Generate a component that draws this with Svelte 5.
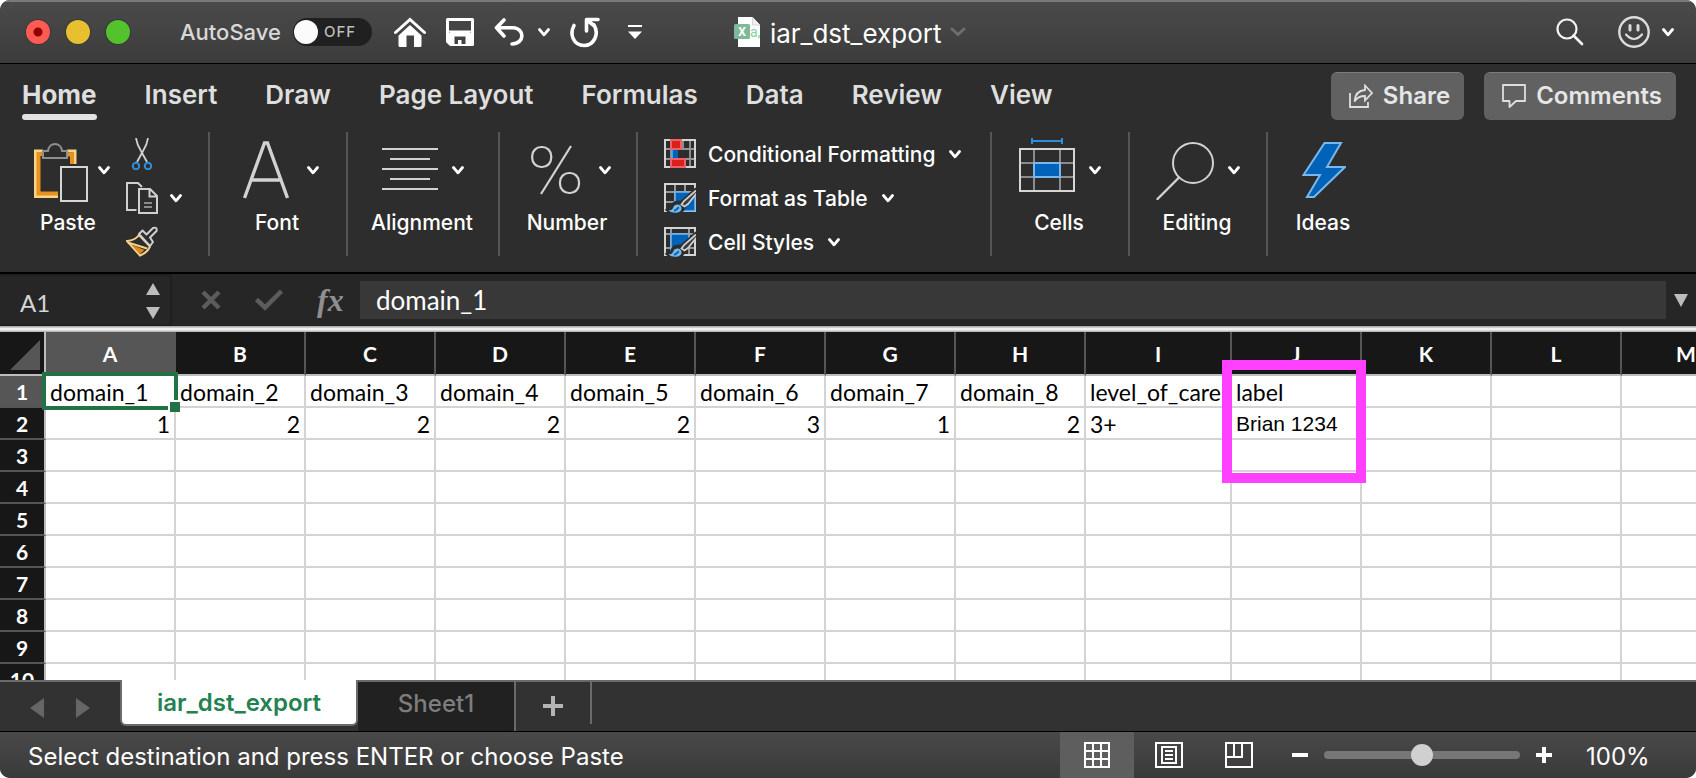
<script>
  let autosave = $state(false);
  let zoom = $state(50);
  let cellName = $state('A1');
  let formula = $state('domain_1');
  let view = $state('normal');

  const tabs = ['Home', 'Insert', 'Draw', 'Page Layout', 'Formulas', 'Data', 'Review', 'View'];
  const columns = ['A', 'B', 'C', 'D', 'E', 'F', 'G', 'H', 'I', 'J', 'K', 'L', 'M'];
  const cells = {
    1: ['domain_1', 'domain_2', 'domain_3', 'domain_4', 'domain_5', 'domain_6', 'domain_7', 'domain_8', 'level_of_care', 'label'],
    2: [1, 2, 2, 2, 2, 3, 1, 2, '3+', 'Brian 1234']
  };
  const rows = Array.from({ length: 10 }, (_, i) => i + 1);
</script>

{#snippet chevron()}
  <svg class="chevron" width="12" height="10" viewBox="0 0 12 10" aria-hidden="true"><path d="M1.500 2.500 6 7.800 10.500 2.500" fill="none" stroke="currentColor" stroke-width="2.800" stroke-linecap="round" stroke-linejoin="round" /></svg>
{/snippet}

{#snippet brush()}
  <path d="M32 5 17 18.500C10 17 8 21 6.500 25L2 27C8 32 20 31 20.500 24.500L33 10" fill="#2d2d2d" stroke="#2d2d2d" stroke-width="1.500" />
  <path d="M32 7.500 20 18 17.500 21.500 20.500 23.500 24 21 32.500 10.500" fill="#3c3c3c" stroke="#cfcfcf" stroke-width="1.800" />
  <path d="M4.500 27.300c3.500 .2 4-1.200 5-3.300 1.500-2.700 5-3.200 7-1.200 2.200 2.500.8 6-3 6.700-3 .6-6.500.2-9-2.200z" fill="#78b8ec" />
  <path d="M10 27.500c3 0 3-2.500 5-3" stroke="#0063b8" stroke-width="2" fill="none" />
{/snippet}

<div class="window">
  <header class="titlebar">
    <div class="lights">
      <button class="light close" aria-label="Close"></button>
      <button class="light minimize" aria-label="Minimize"></button>
      <button class="light full" aria-label="Full screen"></button>
    </div>
    <label class="autosave">
      <span>AutoSave</span>
      <span class="track"><input type="checkbox" role="switch" bind:checked={autosave} /><span class="state">{autosave ? 'ON' : 'OFF'}</span></span>
    </label>
    <div class="quick">
      <button aria-label="Home screen">
        <svg width="32" height="30" viewBox="0 0 32 30"><path d="M1.500 15.500 16 2.500l14.500 13" fill="none" stroke="#fff" stroke-width="3" stroke-linecap="round" /><path d="M16 8 27.500 18.500V28.500a1.500 1.500 0 0 1-1.500 1.500H20V18.500H12.500V30H6a1.500 1.500 0 0 1-1.500-1.500V18.500z" fill="#fff" /></svg>
      </button>
      <button aria-label="Save">
        <svg width="28" height="28" viewBox="0 0 28 28"><path d="M1.500 1.500H26.500V26.500H4.500L1.500 23.500z" fill="none" stroke="#fff" stroke-width="3" stroke-linejoin="round" /><path d="M3 14.500H25V27H3z" fill="#fff" /><path d="M2 12.500 4.500 15H23.500L26 12.500" fill="#fff" /><path d="M8.500 26V18.500H19.500V26H15.500V22H12V26z" fill="#434343" /></svg>
      </button>
      <span class="split">
        <button aria-label="Undo">
          <svg width="30" height="28" viewBox="0 0 30 28"><path d="M10 2 2.500 9.800 10 18M3 9.800H19c12 .5 12 16-1 16.200" fill="none" stroke="#fff" stroke-width="3.600" stroke-linecap="round" stroke-linejoin="round" /></svg>
        </button>
        <button aria-label="Undo history">{@render chevron()}</button>
      </span>
      <button aria-label="Redo">
        <svg width="30" height="32" viewBox="0 0 30 32"><path d="M4 9.500C-1 19 4 29.500 14 29.500S29.500 18 24 9M16.500 15V3.500H28M17 4l7.500 6" fill="none" stroke="#fff" stroke-width="3.600" stroke-linecap="round" stroke-linejoin="round" /></svg>
      </button>
      <button class="more" aria-label="Customize toolbar">
        <svg width="14" height="16" viewBox="0 0 14 16"><path d="M0 1H14V3H0z" fill="#fff" /><path d="M0 7.500H14L7 15z" fill="#fff" /></svg>
      </button>
    </div>
    <div class="title">
      <svg width="27" height="30" viewBox="0 0 27 30" aria-hidden="true"><path d="M4 0H18.500L26 8V30H4z" fill="#fff" /><path d="M18.500 0V8H26" fill="#f2f2f2" stroke="#d5d5d5" stroke-width="1" /><rect y="7" width="16" height="15" rx="1.500" fill="#7fba98" /><text x="8" y="19" text-anchor="middle" font-family="Roboto, sans-serif" font-size="12" font-weight="700" fill="#fff">X</text><text x="16" y="20" font-family="Roboto, sans-serif" font-size="14" fill="#7fd1a0">a,</text></svg>
      <span>iar_dst_export</span>
      <svg width="16" height="10" viewBox="0 0 16 10" aria-hidden="true"><path d="M2 2l6 5.500L14 2" fill="none" stroke="#6e6e6e" stroke-width="3" stroke-linecap="round" /></svg>
    </div>
    <div class="account">
      <button aria-label="Search">
        <svg width="28" height="28" viewBox="0 0 28 28"><circle cx="11" cy="11" r="9.500" fill="none" stroke="#f4f4f4" stroke-width="2.200" /><path d="M17.500 17.500 26 26" stroke="#f4f4f4" stroke-width="2.600" stroke-linecap="round" /></svg>
      </button>
      <button class="smile" aria-label="Feedback">
        <svg width="32" height="32" viewBox="0 0 32 32"><circle cx="16" cy="16" r="14.700" fill="none" stroke="#dcdcdc" stroke-width="2.400" /><path d="M12 9.500V14M20 9.500V14" stroke="#dcdcdc" stroke-width="3" stroke-linecap="round" /><path d="M8 18.500Q16 27.500 24 18.500" fill="none" stroke="#dcdcdc" stroke-width="2.200" stroke-linecap="round" /></svg>
        {@render chevron()}
      </button>
    </div>
  </header>

  <div class="tabrow">
    <nav aria-label="Ribbon tabs">
      {#each tabs as tab, i}
        <button class="tab" class:current={i === 0}>{tab}</button>
      {/each}
    </nav>
    <div class="actions">
      <button class="action">
        <svg width="24" height="24" viewBox="0 0 24 24" aria-hidden="true"><path d="M1 9V23H19V18" fill="none" stroke="#dedede" stroke-width="1.800" /><path d="M16 1.500 23 9 16 16.500V12C11 12 8 13.500 5.500 17.500 6 10.500 10 6.500 16 6z" fill="none" stroke="#dedede" stroke-width="1.800" /></svg>
        Share
      </button>
      <button class="action">
        <svg width="24" height="24" viewBox="0 0 24 24" aria-hidden="true"><path d="M1 1H23V17H14L7.500 23V17H1z" fill="none" stroke="#dedede" stroke-width="1.800" stroke-linejoin="round" /></svg>
        Comments
      </button>
    </div>
  </div>

  <div class="ribbon">
    <div class="group clipboard">
      <button class="big">
        <span class="face">
          <svg width="56" height="64" viewBox="0 0 56 64" aria-hidden="true"><path d="M9 13H1.500V58.500H24" fill="none" stroke="#f7d488" stroke-width="3" /><path d="M33 13H41V26" fill="none" stroke="#f7d488" stroke-width="3" /><path d="M9 16H4.500V55.500H24M34 16.500H38V26" fill="none" stroke="#e8921e" stroke-width="4" /><path d="M9 13H14C15 3.500 27 3.500 28 13H33V20H9z" fill="#2d2d2d" stroke="#8f8f8f" stroke-width="2" /><rect x="27" y="29" width="26" height="34" fill="#2d2d2d" stroke="#d6d6d6" stroke-width="2" /></svg>
          {@render chevron()}
        </span>
        <span class="label">Paste</span>
      </button>
      <div class="small">
        <button aria-label="Cut">
          <svg width="32" height="32" viewBox="0 0 32 32"><path d="M10 0Q11 7 15 13L21 24M22 0Q21 7 17 13L11 24" fill="none" stroke="#d0d0d0" stroke-width="1.800" /><circle cx="10" cy="28" r="3.200" fill="none" stroke="#2f8ed8" stroke-width="2" /><circle cx="22" cy="28" r="3.200" fill="none" stroke="#2f8ed8" stroke-width="2" /></svg>
        </button>
        <button aria-label="Copy">
          <svg width="32" height="32" viewBox="0 0 32 32"><path d="M10.500 28H1V1H12L16 5" fill="none" stroke="#d0d0d0" stroke-width="2" /><path d="M13 7H24L31 14V31H13zM23.500 7V14.500H31" fill="none" stroke="#d0d0d0" stroke-width="2" /><path d="M18 21H26M18 25H26" stroke="#8a8a8a" stroke-width="2" /></svg>
          {@render chevron()}
        </button>
        <button aria-label="Format painter">
          <svg width="32" height="32" viewBox="0 0 32 32"><path d="M1 15Q9 14.500 13 9L24 20.500Q21 27 14 29.500z" fill="#2d2d2d" stroke="#f5d287" stroke-width="2" /><path d="M5 18.500 18.500 24 14 28z" fill="#e08a1d" /><path d="M2 16.500 21 22.500" stroke="#f5d287" stroke-width="2" /><path d="M13 8 16.500 4.500 20.500 8.500 27 2Q31.500 .5 30.500 5L24 11.500 27 16 24 20z" fill="#2d2d2d" stroke="#d0d0d0" stroke-width="2" stroke-linejoin="round" /></svg>
        </button>
      </div>
    </div>

    <div class="group narrow">
      <button class="big">
        <span class="face wide">
          <svg width="46" height="64" viewBox="0 0 46 64" aria-hidden="true"><path d="M1.500 60 21.500 5H24.500L44.500 60M9 42H37" fill="none" stroke="#d2d2d2" stroke-width="3.400" /></svg>
          {@render chevron()}
        </span>
        <span class="label">Font</span>
      </button>
    </div>

    <div class="group medium">
      <button class="big">
        <span class="face">
          <svg width="56" height="64" viewBox="0 0 56 64" aria-hidden="true"><path d="M0 11H56M8 21H48M0 31H56M8 41H48M0 51H56" stroke="#d2d2d2" stroke-width="2" /></svg>
          {@render chevron()}
        </span>
        <span class="label">Alignment</span>
      </button>
    </div>

    <div class="group narrow">
      <button class="big">
        <span class="face wide">
          <svg width="50" height="64" viewBox="0 0 50 64" aria-hidden="true"><path d="M40 8 10 56" stroke="#d2d2d2" stroke-width="2.200" /><rect x="1.200" y="9" width="19" height="20" rx="9" fill="none" stroke="#d2d2d2" stroke-width="2.200" /><rect x="29" y="35" width="19" height="20" rx="9" fill="none" stroke="#d2d2d2" stroke-width="2.200" /></svg>
          {@render chevron()}
        </span>
        <span class="label">Number</span>
      </button>
    </div>

    <div class="group styles">
      <button>
        <svg width="32" height="30" viewBox="0 0 32 30" aria-hidden="true"><path d="M1 10H31M1 20H31M7 1V28M19 1V28M26 1V28" stroke="#969696" stroke-width="1.800" /><rect x="1" y="1" width="30" height="27" fill="none" stroke="#d4d4d4" stroke-width="2" /><rect x="7" y="1" width="10" height="9" fill="#d9201a" stroke="#f0606a" stroke-width="2" /><rect x="7" y="20" width="14" height="8" fill="#d9201a" stroke="#f0606a" stroke-width="2" /><path d="M14 11H25V19H14z" fill="#2d2d2d" /><path d="M8 11H14V19H8z" fill="#0063b8" /><path d="M8 11V19" stroke="#5fb0ee" stroke-width="1.500" /></svg>
        Conditional Formatting {@render chevron()}
      </button>
      <button>
        <svg width="32" height="30" viewBox="0 0 32 30" aria-hidden="true"><path d="M1 9H31M1 19H31M11 1V28M21 1V28" stroke="#969696" stroke-width="2" /><rect x="1" y="1" width="30" height="27" fill="none" stroke="#d4d4d4" stroke-width="2" /><rect x="11" y="9" width="20" height="19" fill="#0063b8" stroke="#78b8ec" stroke-width="1.500" />{@render brush()}</svg>
        Format as Table {@render chevron()}
      </button>
      <button>
        <svg width="32" height="30" viewBox="0 0 32 30" aria-hidden="true"><path d="M1 7H31M1 21H31M7 1V28M25 1V28" stroke="#969696" stroke-width="2" /><rect x="1" y="1" width="30" height="27" fill="none" stroke="#d4d4d4" stroke-width="2" /><rect x="7" y="7" width="18" height="14" fill="#0063b8" stroke="#78b8ec" stroke-width="1.500" />{@render brush()}</svg>
        Cell Styles {@render chevron()}
      </button>
    </div>

    <div class="group narrow">
      <button class="big">
        <span class="face">
          <svg width="56" height="64" viewBox="0 0 56 64" aria-hidden="true"><path d="M13 3H43M13 0V6M43 0V6" stroke="#2f8ed8" stroke-width="2" /><path d="M1 25H55M1 39H55M15 11V53M41 11V53" stroke="#8c8c8c" stroke-width="2" /><rect x="1" y="11" width="54" height="42" fill="none" stroke="#d6d6d6" stroke-width="2" /><rect x="15" y="25" width="26" height="14" fill="#0063b8" stroke="#78b8ec" stroke-width="2" /></svg>
          {@render chevron()}
        </span>
        <span class="label">Cells</span>
      </button>
    </div>

    <div class="group narrow">
      <button class="big">
        <span class="face">
          <svg width="58" height="64" viewBox="0 0 58 64" aria-hidden="true"><circle cx="37" cy="25" r="20" fill="none" stroke="#d2d2d2" stroke-width="2" /><path d="M23 39.500 1.500 61" stroke="#d2d2d2" stroke-width="2.400" stroke-linecap="round" /></svg>
          {@render chevron()}
        </span>
        <span class="label">Editing</span>
      </button>
    </div>

    <div class="group last">
      <button class="big">
        <span class="face">
          <svg width="44" height="64" viewBox="0 0 44 64" aria-hidden="true"><path d="M22.500 5H39L25 29H43L12 59H5L18 37H1.500z" fill="#0063b8" stroke="#78b8ec" stroke-width="2" /></svg>
        </span>
        <span class="label">Ideas</span>
      </button>
    </div>
  </div>

  <div class="formulabar">
    <div class="namebox">
      <input aria-label="Name box" bind:value={cellName} />
      <svg width="14" height="36" viewBox="0 0 14 36" aria-hidden="true"><path d="M7 0 14 12H0zM0 24H14L7 36z" fill="#bcbcbc" /></svg>
    </div>
    <div class="entry">
      <button aria-label="Cancel"><svg width="20" height="20" viewBox="0 0 20 20"><path d="M2 2 18 18M18 2 2 18" stroke="#5c5c5c" stroke-width="4.500" /></svg></button>
      <button aria-label="Enter"><svg width="28" height="22" viewBox="0 0 28 22"><path d="M1.500 10.500 10 18.500 26.500 2" fill="none" stroke="#5c5c5c" stroke-width="4.500" /></svg></button>
      <button class="fx" aria-label="Insert function">fx</button>
    </div>
    <input class="formula" aria-label="Formula" bind:value={formula} />
    <button class="expand" aria-label="Expand formula bar"><svg width="14" height="14" viewBox="0 0 14 14"><path d="M0 1H14L7 14z" fill="#bcbcbc" /></svg></button>
  </div>

  <div class="sheet">
    <table>
      <colgroup>
        <col class="index" />
        {#each columns as c}<col class={c === 'I' ? 'broad' : 'cell'} />{/each}
      </colgroup>
      <thead>
        <tr>
          <th class="corner" aria-label="Select all"><svg width="30" height="30" viewBox="0 0 30 30" aria-hidden="true"><path d="M30 0V30H0z" fill="#565656" /></svg></th>
          {#each columns as c}<th scope="col" class:active={c === 'A'}>{c}</th>{/each}
        </tr>
      </thead>
      <tbody>
        {#each rows as r}
          <tr>
            <th scope="row" class:active={r === 1}>{r}</th>
            {#each columns as c, i}
              {@const value = cells[r]?.[i] ?? ''}
              <td class:number={typeof value === 'number'} class:plain={r === 2 && c === 'J'} class:selected={r === 1 && c === 'A'} class:marked={r === 1 && c === 'J'}>{value}{#if r === 1 && c === 'A'}<i class="cursor"></i><i class="handle"></i>{/if}{#if r === 1 && c === 'J'}<i class="marker"></i>{/if}</td>
            {/each}
          </tr>
        {/each}
      </tbody>
    </table>
  </div>

  <div class="sheettabs">
    <div class="arrows">
      <button aria-label="Previous sheet"><svg width="14" height="20" viewBox="0 0 14 20"><path d="M14 0V20L0 10z" fill="#666" /></svg></button>
      <button aria-label="Next sheet"><svg width="14" height="20" viewBox="0 0 14 20"><path d="M0 0V20L14 10z" fill="#666" /></svg></button>
    </div>
    <button class="sheettab open">iar_dst_export</button>
    <button class="sheettab">Sheet1</button>
    <button class="add" aria-label="Add sheet"><svg width="20" height="20" viewBox="0 0 20 20"><path d="M10 0V20M0 10H20" stroke="#b4b4b4" stroke-width="4" /></svg></button>
  </div>

  <footer>
    <span class="message">Select destination and press ENTER or choose Paste</span>
    <div class="views">
      <button class:pressed={view === 'normal'} aria-label="Normal view" onclick={() => (view = 'normal')}><svg width="26" height="26" viewBox="0 0 26 26"><path d="M1 1H25V25H1zM9 1V25M17 1V25M1 9H25M1 17H25" fill="none" stroke="#fff" stroke-width="2" /></svg></button>
      <button class:pressed={view === 'layout'} aria-label="Page layout view" onclick={() => (view = 'layout')}><svg width="28" height="26" viewBox="0 0 28 26"><path d="M1 1H27V25H1zM7 5H21V21H7zM10 9H18M10 13H18M10 17H18" fill="none" stroke="#fff" stroke-width="2" /></svg></button>
      <button class:pressed={view === 'break'} aria-label="Page break view" onclick={() => (view = 'break')}><svg width="28" height="26" viewBox="0 0 28 26"><path d="M1 1H27V25H1zM9 1V15M1 15H17V1" fill="none" stroke="#fff" stroke-width="2" /></svg></button>
    </div>
    <div class="zoom">
      <button aria-label="Zoom out"><svg width="16" height="16" viewBox="0 0 16 16"><path d="M0 8H16" stroke="#fff" stroke-width="4" /></svg></button>
      <input type="range" aria-label="Zoom" min="0" max="100" bind:value={zoom} />
      <button aria-label="Zoom in"><svg width="16" height="16" viewBox="0 0 16 16"><path d="M8 0V16M0 8H16" stroke="#fff" stroke-width="4" /></svg></button>
    </div>
    <span class="percent">{zoom * 2}%</span>
  </footer>
</div>

<style>
  :global(body) {
    margin: 0;
    background: #fff;
  }
  * {
    box-sizing: border-box;
  }
  svg {
    display: block;
    flex: none;
  }
  button {
    display: flex;
    align-items: center;
    margin: 0;
    padding: 0;
    border: 0;
    background: none;
    color: inherit;
    font: inherit;
  }
  .window {
    display: flex;
    flex-direction: column;
    height: 100vh;
    overflow: hidden;
    border-radius: 10px;
    background: #2d2d2d;
    color: #fff;
    font-family: Inter, 'Liberation Sans', sans-serif;
    font-size: 21px;
  }

  .titlebar {
    display: flex;
    align-items: center;
    flex: none;
    height: 64px;
    padding: 0 22px 2px 26px;
    border-top: 2px solid #7a7a7a;
    border-bottom: 1px solid #000;
    background: linear-gradient(#4a4a4a, #3c3c3c);
  }
  .lights {
    display: flex;
    gap: 16px;
  }
  .light {
    width: 24px;
    height: 24px;
    border-radius: 50%;
    box-shadow: 0 0 0 1px #383838;
  }
  .close {
    background: radial-gradient(circle, #900000 0 4px, #ff5b52 5px);
  }
  .minimize {
    background: #e6c02e;
  }
  .full {
    background: #54c22d;
  }
  .autosave {
    display: flex;
    align-items: center;
    gap: 12px;
    margin-left: 50px;
    color: #d8d8d8;
    font-size: 22px;
    font-weight: 500;
  }
  .track {
    display: flex;
    align-items: center;
    gap: 6px;
    width: 79px;
    height: 28px;
    padding: 0 1px;
    border-radius: 14px;
    background: #202020;
  }
  .track input {
    appearance: none;
    width: 24px;
    height: 24px;
    margin: 0;
    border-radius: 50%;
    background: #fbfbfb;
  }
  .state {
    color: #bdbdbd;
    font-size: 15px;
    letter-spacing: 1px;
  }
  .quick {
    display: flex;
    align-items: center;
    gap: 20px;
    margin-left: 22px;
  }
  .split {
    display: flex;
    align-items: center;
    gap: 14px;
  }
  .more {
    margin-left: 8px;
  }
  .title {
    display: flex;
    align-items: center;
    gap: 9px;
    margin-left: 92px;
    font-size: 26px;
  }
  .title span {
    padding-top: 4px;
  }
  .account {
    display: flex;
    align-items: center;
    gap: 34px;
    margin-left: auto;
  }
  .smile {
    gap: 12px;
  }

  .tabrow {
    display: flex;
    align-items: flex-start;
    justify-content: space-between;
    flex: none;
    height: 66px;
    padding: 8px 20px 0 22px;
    color: #dedede;
  }
  nav {
    display: flex;
    gap: 48px;
  }
  .tab {
    height: 48px;
    padding-bottom: 3px;
    font-size: 26px;
    font-weight: 600;
  }
  .current {
    position: relative;
    font-weight: 700;
  }
  .current::after {
    content: '';
    position: absolute;
    inset: auto 0 0;
    height: 6px;
    border-radius: 3px;
    background: #e2e2e2;
  }
  .actions {
    display: flex;
    gap: 20px;
  }
  .action {
    gap: 10px;
    height: 48px;
    padding: 0 14px 2px 18px;
    border-top: 1px solid #7c7c7c;
    border-radius: 6px;
    background: #616161;
    color: #e6e6e6;
    font-size: 24px;
    font-weight: 600;
  }

  .ribbon {
    display: flex;
    flex: none;
    height: 144px;
    padding: 2px 0 16px;
    border-bottom: 2px solid #000;
    font-weight: 500;
  }
  .group {
    display: flex;
    flex: none;
    justify-content: center;
    border-right: 2px solid #555;
  }
  .clipboard {
    justify-content: flex-start;
    width: 210px;
    padding-left: 34px;
  }
  .narrow {
    width: 138px;
  }
  .medium {
    width: 152px;
  }
  .last {
    width: 112px;
    border: 0;
  }
  .big {
    flex-direction: column;
    padding-top: 6px;
  }
  .face {
    display: flex;
    align-items: center;
    gap: 14px;
    height: 64px;
  }
  .face.wide {
    gap: 18px;
    padding-left: 6px;
  }
  .label {
    margin-top: 7px;
    padding-right: 2px;
    line-height: 28px;
  }
  .clipboard .face {
    gap: 8px;
  }
  .clipboard .label {
    align-self: flex-start;
    width: 70px;
    text-align: center;
  }
  .small {
    display: flex;
    flex-direction: column;
    gap: 12px;
    margin-left: 16px;
    padding-top: 6px;
  }
  .small button {
    gap: 12px;
    height: 32px;
  }
  .styles {
    flex-direction: column;
    justify-content: flex-start;
    gap: 16px;
    width: 354px;
    padding: 8px 0 0 26px;
  }
  .styles button {
    gap: 12px;
    height: 28px;
  }
  .styles .chevron {
    margin-left: 2px;
  }

  .formulabar {
    display: flex;
    align-items: center;
    flex: none;
    height: 52px;
    background: #262626;
    font-family: Lato, Carlito, sans-serif;
  }
  .namebox {
    display: flex;
    align-items: center;
    align-self: stretch;
    width: 172px;
    padding: 2px 10px 0 20px;
    border: 2px solid #1f1f1f;
    border-left: 0;
  }
  input {
    font-family: inherit;
  }
  .namebox input {
    flex: 1;
    min-width: 0;
    padding: 2px 0 0;
    border: 0;
    background: none;
    color: #d6d6d6;
    font-size: 24px;
  }
  .entry {
    display: flex;
    align-items: center;
    gap: 34px;
    width: 188px;
    padding-left: 29px;
  }
  .fx {
    color: #8f8f8f;
    font: italic bold 32px/34px 'Liberation Serif', serif;
  }
  .formula {
    flex: 1;
    min-width: 0;
    height: 38px;
    padding: 0 16px;
    border: 0;
    background: #383838;
    color: #fff;
    font-size: 26px;
  }
  .expand {
    margin: 0 8px;
  }

  .sheet {
    flex: 1;
    min-height: 0;
    overflow: hidden;
    padding-top: 6px;
    background: linear-gradient(#999, #fff 3px, #aaa) 0 0 / 100% 6px no-repeat #fff;
    color: #000;
    font-family: Lato, Carlito, sans-serif;
  }
  table {
    width: 1752px;
    border-spacing: 0;
    table-layout: fixed;
    font-size: 23px;
  }
  .index {
    width: 46px;
  }
  .cell {
    width: 130px;
  }
  .broad {
    width: 146px;
  }
  th {
    padding: 0;
    border-right: 2px solid #555;
    border-bottom: 2px solid #bdbdbd;
    background: #171717;
    color: #fff;
    font-size: 21px;
    font-weight: 700;
  }
  thead th {
    height: 44px;
  }
  tbody th {
    border-right-color: #bdbdbd;
    border-bottom-color: #555;
  }
  .corner {
    border-right-color: #bdbdbd;
    vertical-align: bottom;
  }
  .corner svg {
    margin: 0 0 4px 10px;
  }
  thead .active {
    border-right-color: #565656;
  }
  .active {
    background: #565656;
  }
  td {
    height: 32px;
    padding: 2px 4px 0;
    border-right: 2px solid #d4d4d4;
    border-bottom: 2px solid #d4d4d4;
    line-height: 28px;
    white-space: nowrap;
  }
  .number {
    text-align: right;
  }
  .plain {
    font-family: 'Liberation Sans', Arial, sans-serif;
    font-size: 21px;
  }
  .selected,
  .marked {
    position: relative;
  }
  .cursor {
    position: absolute;
    inset: -4px;
    border: 4px solid #217346;
  }
  .handle {
    position: absolute;
    right: -6px;
    bottom: -6px;
    width: 12px;
    height: 12px;
    border: solid #fff;
    border-width: 2px 0 0 2px;
    background: #217346;
  }
  .marker {
    position: absolute;
    inset: -16px -6px auto -10px;
    height: 123px;
    border: 10px solid #ff40ff;
  }

  .sheettabs {
    display: flex;
    flex: none;
    height: 52px;
    border-top: 2px solid #6a6a6a;
    border-bottom: 1px solid #000;
    background: #323232;
  }
  .arrows {
    display: flex;
    gap: 32px;
    width: 120px;
    padding: 2px 0 0 30px;
  }
  .sheettab {
    justify-content: center;
    width: 158px;
    padding-bottom: 6px;
    border-right: 2px solid #6a6a6a;
    background: #212121;
    color: #7d7d7d;
    font-size: 24px;
    font-weight: 500;
  }
  .open {
    width: 238px;
    height: 46px;
    margin-top: -2px;
    padding-bottom: 0;
    border: solid #6a6a6a;
    border-width: 0 2px 2px;
    border-radius: 0 0 6px 6px;
    background: #fff;
    color: #23824f;
    font-weight: 600;
  }
  .add {
    justify-content: center;
    width: 76px;
    height: 42px;
    padding-top: 6px;
    border-right: 2px solid #6a6a6a;
  }

  footer {
    display: flex;
    align-items: center;
    flex: none;
    height: 46px;
    padding-left: 28px;
    background: linear-gradient(#494949, #3a3a3a);
    font-size: 24px;
  }
  .message {
    flex: 1;
    padding-top: 3px;
    white-space: nowrap;
  }
  .views {
    display: flex;
    align-self: stretch;
  }
  .views button {
    justify-content: center;
    width: 70px;
  }
  .views button.pressed {
    width: 74px;
    background: #5e5e5e;
  }
  .zoom {
    display: flex;
    align-items: center;
    gap: 16px;
    margin-left: 18px;
  }
  .zoom input {
    appearance: none;
    width: 196px;
    height: 22px;
    margin: 0;
    background: none;
  }
  .zoom input::-webkit-slider-runnable-track {
    height: 8px;
    border-radius: 4px;
    background: #777;
  }
  .zoom input::-webkit-slider-thumb {
    appearance: none;
    width: 22px;
    height: 22px;
    margin-top: -7px;
    border-radius: 50%;
    background: #d0d0d0;
  }
  .percent {
    width: 144px;
    padding: 3px 0 0 34px;
  }
</style>
